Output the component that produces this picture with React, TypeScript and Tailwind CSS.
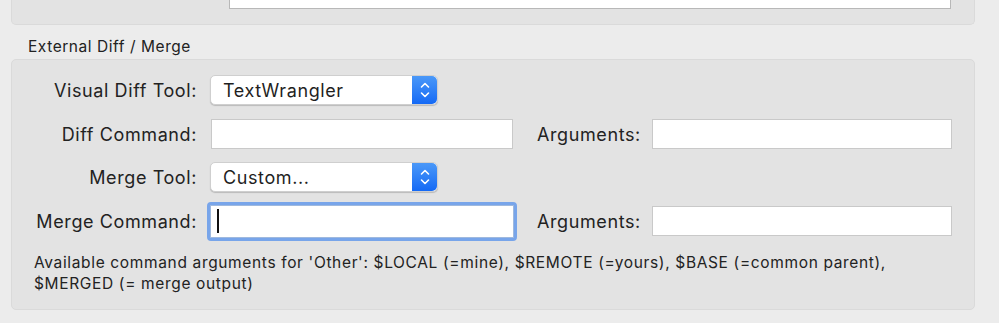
function Stepper() {
  return (
    <div className="w-[25px] self-stretch rounded-r-[5px] bg-gradient-to-b from-[#4a98f8] to-[#1469f5] flex items-center justify-center">
      <svg width="10" height="18" viewBox="0 0 10 18" fill="none" stroke="white" strokeWidth="1.6" strokeLinecap="round" strokeLinejoin="round">
        <path d="M1.5 6 L5 2.5 L8.5 6" />
        <path d="M1.5 12 L5 15.5 L8.5 12" />
      </svg>
    </div>
  );
}

function Select({ value }: { value: string }) {
  return (
    <div className="w-[228px] h-[30px] flex items-center bg-white rounded-[5px] border border-[#cfcfcf] shadow-[0_1px_1px_rgba(0,0,0,0.18)]">
      <span className="flex-1 pl-[12px] text-[18px] tracking-[0.6px] text-[#1f1f1f]">{value}</span>
      <Stepper />
    </div>
  );
}

function Field({ width, focused }: { width: string; focused?: boolean }) {
  if (focused) {
    return (
      <div className="rounded-[4px] border-[3px] border-[#78a5ea]">
        <div className={`${width} h-[33px] bg-white border border-[#9fb9de] flex items-center pl-[6px]`}>
          <div className="w-[2px] h-[24px] bg-[#111]" />
        </div>
      </div>
    );
  }
  return <div className={`${width} h-[30px] bg-white border border-[#c9c9c9]`} />;
}

function Label({ children }: { children: string }) {
  return <div className="w-[185px] text-right text-[18px] tracking-[0.6px] text-[#222] whitespace-nowrap">{children}</div>;
}

function ArgsLabel() {
  return <div className="w-[115px] text-[18px] tracking-[0.6px] text-[#222]">Arguments:</div>;
}

export default function App() {
  return (
    <div className="w-[999px] h-[323px] bg-[#ececec] px-[11px] font-['Inter','Liberation_Sans',sans-serif] overflow-hidden">
      <div className="w-[964px] h-[25px] bg-[#e3e3e3] rounded-b-[5px] border-x border-b border-[#dadada] pl-[217px]">
        <div className="w-[722px] h-[9px] bg-white border-x border-b border-[#b8b8b8]" />
      </div>

      <div className="h-[34px] pl-[17px] pt-[13px] text-[15.5px] tracking-[0.55px] text-[#222] leading-[18px]">External Diff / Merge</div>

      <div className="w-[964px] h-[251px] bg-[#e3e3e3] rounded-[5px] border border-[#dadada] pt-[15px]">
        <div className="flex items-center gap-[13px] h-[30px]">
          <Label>Visual Diff Tool:</Label>
          <Select value="TextWrangler" />
        </div>

        <div className="flex items-center h-[30px] mt-[14px]">
          <Label>Diff Command:</Label>
          <div className="ml-[14px]">
            <Field width="w-[302px]" />
          </div>
          <div className="ml-[24px]">
            <ArgsLabel />
          </div>
          <Field width="w-[300px]" />
        </div>

        <div className="flex items-center gap-[13px] h-[30px] mt-[13px]">
          <Label>Merge Tool:</Label>
          <Select value="Custom..." />
        </div>

        <div className="flex items-center h-[30px] mt-[14px]">
          <Label>Merge Command:</Label>
          <div className="ml-[10px]">
            <Field width="w-[304px]" focused />
          </div>
          <div className="ml-[20px]">
            <ArgsLabel />
          </div>
          <Field width="w-[300px]" />
        </div>

        <p className="mt-[16px] pl-[22px] text-[15.5px] tracking-[0.65px] leading-[21px] text-[#222] whitespace-nowrap">
          Available command arguments for 'Other': $LOCAL (=mine), $REMOTE (=yours), $BASE (=common parent),
          <br />
          $MERGED (= merge output)
        </p>
      </div>
    </div>
  );
}
